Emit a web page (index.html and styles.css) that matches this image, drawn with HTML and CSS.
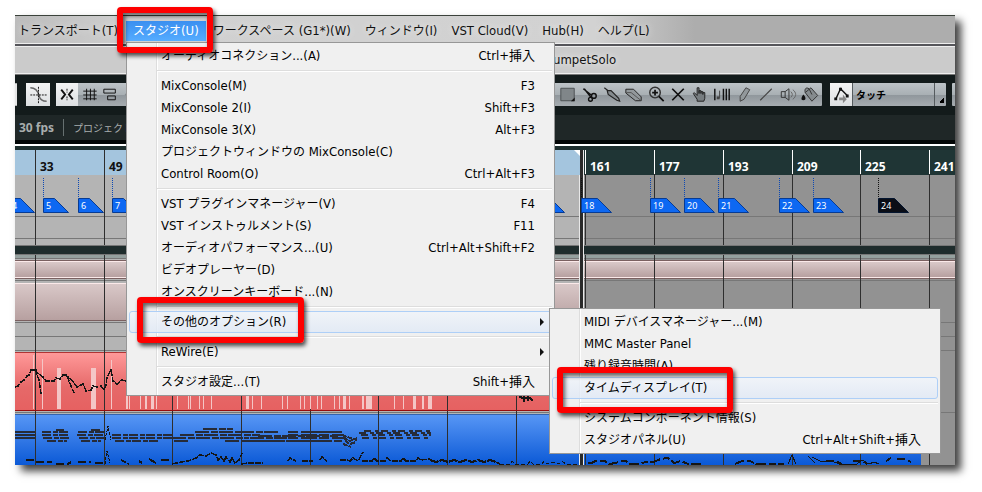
FILE: index.html
```
<!DOCTYPE html>
<html lang="ja">
<head>
    <meta charset="UTF-8">
    <meta name="viewport" content="width=device-width, initial-scale=1.0">
    <title>TrumpetSolo</title>
    <link rel="stylesheet" href="styles.css">
</head>
<body>
    <div class="window">
        <nav class="menubar">
            <button><span class="kana">トランスポート</span>(T)</button>
            <button class="open"><span class="kana">スタジオ</span>(U)</button>
            <button><span class="kana">ワークスペース</span> (G1*)(W)</button>
            <button><span class="kana">ウィンドウ</span>(I)</button>
            <button>VST Cloud(V)</button>
            <button>Hub(H)</button>
            <button><span class="kana">ヘルプ</span>(L)</button>
        </nav>
        <div class="title">TrumpetSolo</div>

        <div class="toolbar">
            <div class="tools stub"></div>
            <button class="tool single" aria-label="クロスフェード">
                <svg viewBox="0 0 24 24"><path d="M4 5c6 0 8 4 9 8s3 6 8 6" stroke="#666" stroke-width="1.500"/><path d="M4 12.500h17M12.500 4v17" stroke-dasharray="2 1"/></svg>
            </button>
            <div class="tools snap">
                <button class="tool on" aria-label="スナップ">
                    <svg viewBox="0 0 22 24"><path d="M5 7l4 5-4 5M17 7l-4 5 4 5" stroke-width="2"/><path d="M11 6v4M11 14v4" stroke-dasharray="2 1"/></svg>
                </button>
                <button class="tool" aria-label="グリッド">
                    <svg viewBox="0 0 22 24"><path d="M8.500 6v12M12.500 6v12M16.500 6v12M5 8.500h14M5 12.500h14M5 16.500h14"/></svg>
                </button>
                <button class="tool" aria-label="クオンタイズ">
                    <svg viewBox="0 0 22 24"><path d="M3.500 6.500h12v4h-12zM7.500 13.500h8v4h-8z"/></svg>
                </button>
                <button class="tool faded" aria-label="リンク">
                    <svg viewBox="0 0 22 24"><path d="M8 7l-5 5 5 5M12 10h6"/></svg>
                </button>
            </div>
            <div class="tools edit">
                <button class="tool" aria-label="範囲選択">
                    <svg viewBox="0 0 22 24"><path d="M3.500 5.500h14v13h-14z" fill="#808689" stroke="#4b5053"/><path d="M18 15v4h-4z" fill="#111" stroke="none"/></svg>
                </button>
                <button class="tool" aria-label="はさみ">
                    <svg viewBox="0 0 22 24"><path d="M4 6l9 7M5 6l7 9" stroke-width="1.500"/><circle cx="15" cy="13.500" r="2.500" stroke-width="1.500"/><circle cx="11.500" cy="17" r="2" stroke-width="1.500"/></svg>
                </button>
                <button class="tool" aria-label="のり">
                    <svg viewBox="0 0 22 24"><path d="M3 5l4 3M6 8l4 0 8 8 1 3-3-1-9-6z" fill="#858b8e" stroke="#222" stroke-width="1.200"/></svg>
                </button>
                <button class="tool" aria-label="消しゴム">
                    <svg viewBox="0 0 22 24"><path d="M2.500 6.500h8l8 8v4h-6l-10-8z" fill="#92989b" stroke="#222"/><path d="M3 10h5l10 8" stroke="#555"/></svg>
                </button>
                <button class="tool" aria-label="ズーム">
                    <svg viewBox="0 0 22 24"><circle cx="10" cy="10" r="5.500" stroke="#333" stroke-width="1.500"/><path d="M10 7v6M7 10h6M14 14l5 5" stroke-width="1.800"/></svg>
                </button>
                <button class="tool" aria-label="ミュート">
                    <svg viewBox="0 0 22 24"><path d="M5 6l12 12M17 6L5 18" stroke-width="1.800"/></svg>
                </button>
                <button class="tool" aria-label="タイムワープ">
                    <svg viewBox="0 0 22 24"><path d="M8 19v-2l-4-6 1-1 3 3V5h2v6V8h2v3-2h2v3-2h2v6l-1 3z" fill="#777d80" stroke="#222"/></svg>
                </button>
                <button class="tool" aria-label="コンプ">
                    <svg viewBox="0 0 22 24"><path d="M3.500 6v12M12.500 6v12M15.500 6v12M18.500 6v12" stroke-width="1.500"/><path d="M8.500 8v8" stroke="#444"/><path d="M5.500 14h3v3h-3z" fill="#444" stroke="none"/></svg>
                </button>
                <button class="tool" aria-label="鉛筆">
                    <svg viewBox="0 0 22 24"><path d="M13 5l4 2-6 10-4 2v-5z" fill="#92989b" stroke="#444"/></svg>
                </button>
                <button class="tool" aria-label="ライン">
                    <svg viewBox="0 0 22 24"><path d="M5 18L17 6" stroke="#444" stroke-width="1.200"/></svg>
                </button>
                <button class="tool" aria-label="再生">
                    <svg viewBox="0 0 22 24"><path d="M4 9h4l4-3v12l-4-3H4zM8 9v6" stroke="#333"/><path d="M14 9c2 2 2 4 0 6M16 7c4 3 4 7 0 10" stroke="#666"/></svg>
                </button>
                <button class="tool" aria-label="カラー">
                    <svg viewBox="0 0 22 24"><path d="M6 10l6-5 7 8-6 6zM6 10c-1-4 1-6 4-4l3 6" fill="#858b8e" stroke="#333"/><path d="M4 12c3 3 3 6 0 6s-2-3 0-6z" fill="#111" stroke="none"/></svg>
                </button>
            </div>
            <div class="tools automation">
                <button class="tool on" aria-label="オートメーション">
                    <svg viewBox="0 0 22 24"><path d="M5.500 17l5-11 7 7" stroke-width="1.500"/><path d="M4 15h3v3H4zM9 5h3v3H9zM16 12h3v3h-3z" fill="#111" stroke="none"/><path d="M9 15h4v-3l4 5-4 4v-3H9z" fill="#888" stroke="none"/></svg>
                </button>
                <button class="mode">タッチ</button>
            </div>
            <div class="tools rest"></div>
        </div>

        <div class="info">
            <b>30 fps</b>
            <span>プロジェクト</span>
        </div>

        <div class="arrange">
            <svg class="canvas" width="940" height="315" viewBox="15 150 940 315">
                <defs>
                    <linearGradient id="pink" x2="0" y2="1"><stop stop-color="#d9c8c8"/><stop offset="1" stop-color="#b7a0a0"/></linearGradient>
                    <linearGradient id="red" x2="0" y2="1"><stop stop-color="#ff9999"/><stop offset=".6" stop-color="#e66969"/><stop offset="1" stop-color="#e66161"/></linearGradient>
                    <linearGradient id="blue" x2="0" y2="1"><stop stop-color="#5796f5"/><stop offset="1" stop-color="#0b59d6"/></linearGradient>
                </defs>

                <!-- ruler and track background -->
                <path fill="#1f3535" d="M15 150h940v25H15z"/>
                <path fill="#a4c5de" d="M15 150h565v25H15z"/>
                <path fill="#fff" d="M574 150h6v6z"/>
                <path fill="#929292" d="M15 175h940v290H15z"/>
                <path fill="#b4b4b4" d="M15 175h565v290H15z"/>
                <path stroke="#777" d="M15 216.500h940M15 238.500h940M15 280.500h940M15 322.500h940M15 336.500h940M15 350.500h940M15 412.500h940"/>
                <path fill="#94a09e" d="M15 255h940v3H15z"/>
                <path stroke="#777" d="M15 258.500h940"/>

                <!-- clips -->
                <path fill="url(#pink)" d="M15 262h940v15H15z"/>
                <path stroke="#fbe9e9" d="M15 261.500h940M15 277.500h940"/>
                <path stroke="#7a6060" d="M15 278.500h940M15 260.500h940"/>
                <path fill="url(#pink)" d="M15 284h565v36H15z"/>
                <path stroke="#fbe9e9" d="M15 283.500h565"/>
                <path stroke="#7a6060" d="M15 320.500h565"/>
                <path fill="url(#red)" d="M15 353h565v57H15z"/>
                <path stroke="#b03535" d="M15 352.500h565"/>
                <path fill="url(#blue)" d="M15 415h906v50H15z"/>
                <path stroke="#3564ad" d="M15 414.500h906"/>

                <!-- bar lines -->
                <path stroke="#2e2e2e" d="M35.500 150v315M104.500 150v315M172.500 150v315M241.500 150v315M310.500 150v315M378.500 150v315M447.500 150v315M516.500 150v315M585.500 150v315M654.500 150v315M723.500 150v315M792.500 150v315M860.500 150v315M929.500 150v315"/>
                <path stroke="#fff" d="M585.500 150v24M654.500 150v24M723.500 150v24M792.500 150v24M860.500 150v24M929.500 150v24"/>
                <path stroke="#980d0d" d="M15 410.500h565"/>
                <path fill="#1e2c2c" d="M15 246h940v8H15z"/>
                <path stroke="#777" d="M15 245.500h940M15 254.500h940"/>
                <path fill="#292929" d="M580 150h3v315h-3z"/>
                <path stroke="#e8e8e8" d="M583.500 150v315M579.500 175v290"/>

                <g class="bars">
                    <text x="40" y="171">33</text><text x="109" y="171">49</text>
                </g>
                <g class="bars light">
                    <text x="590" y="171">161</text><text x="659" y="171">177</text><text x="728" y="171">193</text>
                    <text x="797" y="171">209</text><text x="865" y="171">225</text><text x="934" y="171">241</text>
                </g>

                <!-- cycle markers -->
                <path class="stems" d="M43.500 178v20M78.500 178v20M112.500 178v20M650.500 178v20M684.500 178v20M718.500 178v20M779.500 178v20M813.500 178v20"/>
                <path class="stems dark" d="M581.500 178v20M878.500 178v20"/>
                <g class="flags">
                    <path d="M9.500 198.500h11l14 14h-25zM43.500 198.500h11l14 14h-25zM78.500 198.500h11l14 14h-25zM112.500 198.500h11l14 14h-25z"/>
                    <path d="M534.500 198.500h16l14 14h-30zM581.500 198.500h16l14 14h-30zM650.500 198.500h16l14 14h-30zM684.500 198.500h16l14 14h-30zM718.500 198.500h16l14 14h-30zM779.500 198.500h16l14 14h-30zM813.500 198.500h16l14 14h-30z"/>
                    <path class="active" d="M878.500 198.500h16l14 14h-30z"/>
                    <text x="12" y="209">4</text><text x="46" y="209">5</text><text x="81" y="209">6</text><text x="115" y="209">7</text>
                    <text x="584" y="209">18</text><text x="653" y="209">19</text><text x="687" y="209">20</text><text x="721" y="209">21</text>
                    <text x="782" y="209">22</text><text x="816" y="209">23</text><text x="881" y="209">24</text>
                </g>

                <!-- controller data in the red part -->
                <path fill="#f4c6c6" d="M33 355h1v54h-1zM42 359h1v50h-1zM57 368h4v41h-4zM91 368h5v41h-5zM111 360h1v49h-1zM126 390h2v19h-2zM129 390h1v19h-1zM140 390h1v19h-1zM145 390h2v19h-2zM151 390h3v19h-3zM156 390h1v19h-1zM177 390h1v19h-1zM188 390h1v19h-1zM190 390h1v19h-1zM199 390h1v19h-1zM203 390h1v19h-1zM211 390h1v19h-1zM246 390h3v19h-3zM252 390h1v19h-1zM261 390h1v19h-1zM282 390h1v19h-1zM287 390h1v19h-1zM300 390h1v19h-1zM304 390h1v19h-1zM310 390h1v19h-1zM317 390h1v19h-1zM321 390h1v19h-1zM334 390h1v19h-1zM339 390h1v19h-1zM343 390h3v19h-3zM349 390h1v19h-1zM362 390h2v19h-2zM366 390h6v19h-6zM394 390h1v19h-1zM403 390h1v19h-1zM413 390h3v19h-3zM422 390h2v19h-2zM428 390h4v19h-4z"/>
                <g class="notes">
                    <path stroke-width="1.500" stroke-dasharray="6 1" d="M15 387l3-1 3-4 3-2 3-4 2-1 2-5h5l1 5 2 5 2 14M34 370l5 4 4 3 3 4h8l2-3 4 1 3-4h4l2 4-2-3 4 10 3 7M70 378l7 9 6-3 3 7 5-1 2-4 4 1 4-1 3 4 2-5 1-8 4-7 2 11 4 3 5-4 4 1 3-3h4"/>
                    <path stroke-width="2" d="M519 396l3 2h8l3 3M524 395v7M528 395v6"/>

                    <!-- chords in the blue part -->
                    <g class="chords">
                        <path d="M15 432h20M15 435h20M15 438h20"/>
                        <path stroke-dasharray="9 2 5 1" d="M42 432h27M42 435h28M43 438h27M47 441h20M56 430h8"/>
                        <path stroke-dasharray="9 2 5 1" d="M78 432h26M77 435h27M79 438h25M81 441h20M91 430h9M112 435h60M112 438h60M115 441h45"/>
                        <path stroke-dasharray="14 2 7 1" d="M172 438h77M180 435h80M195 432h47M203 429h30M174 441h16M225 441h60M250 438h37M240 432h38M246 441h90M258 436h80"/>
                        <path stroke-dasharray="10 3 16 2" d="M288 432h54M288 435h56M288 438h58M290 441h52M313 432h27"/>
                        <path stroke-dasharray="5 1" d="M342 435l8 3 7 2M343 438l7 3 7-3M345 441l5 3 6-2M343 444l8 3"/>
                        <path stroke-dasharray="7 4 4 2" d="M359 433h72M361 435h70M362 438h68M364 431h66"/>
                    </g>
                    <path d="M105 440l2-9 1-5 1 6 2 8" stroke-dasharray="3 1"/>
                    <path stroke-width="2" stroke-dasharray="8 3 5 7" d="M26 460h10M36 462h21M56 464h12l3-2h20M95 463h9M139 461l3 2M149 459l7 4M161 460h9"/>
                    <path stroke-dasharray="3 1" d="M105 464l2-13 3 12"/>
                    <path stroke-width="1.500" stroke-dasharray="6 1" d="M121 460l8 4M172 464l9-2 7-1 8-3 4-3 6 1 5-3 5 2 2 5 3-3 3 4 2-4 4 5 2-4 3 5 4-3 3-7M241 464l7-1h15M288 461l2-3 6 3M302 461h11M320 460l2-3 5 4M340 460h7l3 1 3-3 5 3 5-9M362 461h10l2-3 3 3h8l2-3 4 3h10l2-3 3 3h10l2-3 3 2 9-1"/>
                    <path stroke-width="2" stroke-dasharray="9 1" d="M430 460l6 2 6-2 6 2 6-2 6 2 6-2 6 2 6-2 6 2 6-2 6 2 4 2"/>
                    <path stroke-dasharray="4 2" d="M500 464h10l2-3 3 3h13l2-3 3 3h9l2-3 3 3 6-2 6 2 3-3 4 3h13"/>
                    <path stroke-width="2" stroke-dasharray="10 3 7 2" d="M588 463h4l3-2h10l4 3 7-1 4-2h6l4 3h10l5-2h8l8-3 7-1 6 5 7-2 7 3h14M735 464l7-3h8l6 3h28"/>
                    <path d="M788 464l4-9 4 9M808 456l7 7M812 457l8 4h12l7 3h18l5-4 7 4 5-2 5 2"/>
                    <path stroke-width="2" stroke-dasharray="8 3" d="M826 461h10l6 3M853 461h10l4 3M886 461l5-3M897 459h8l6 3"/>
                </g>
            </svg>
        </div>

        <div class="menu studio">
            <button><span class="kana">オーディオコネクション</span>...(A)<kbd>Ctrl+挿入</kbd></button>
            <hr>
            <button>MixConsole(M)<kbd>F3</kbd></button>
            <button>MixConsole 2(I)<kbd>Shift+F3</kbd></button>
            <button>MixConsole 3(X)<kbd>Alt+F3</kbd></button>
            <button><span class="kana">プロジェクトウィンドウの</span> MixConsole(C)</button>
            <button>Control Room(O)<kbd>Ctrl+Alt+F3</kbd></button>
            <hr>
            <button>VST <span class="kana">プラグインマネージャー</span>(V)<kbd>F4</kbd></button>
            <button>VST <span class="kana">インストゥルメント</span>(S)<kbd>F11</kbd></button>
            <button><span class="kana">オーディオパフォーマンス</span>...(U)<kbd>Ctrl+Alt+Shift+F2</kbd></button>
            <button><span class="kana">ビデオプレーヤー</span>(D)</button>
            <button><span class="kana">オンスクリーンキーボード</span>...(N)</button>
            <hr>
            <button class="sub hover"><span class="kana">その他のオプション</span>(R)</button>
            <hr>
            <button class="sub">ReWire(E)</button>
            <hr>
            <button><span class="kana">スタジオ設定</span>...(T)<kbd>Shift+挿入</kbd></button>
        </div>

        <div class="menu options">
            <button>MIDI <span class="kana">デバイスマネージャー</span>...(M)</button>
            <button>MMC Master Panel</button>
            <button><span class="kana">残り録音時間</span>(A)</button>
            <button class="hover"><span class="kana">タイムディスプレイ</span>(T)</button>
            <hr>
            <button><span class="kana">システムコンポーネント情報</span>(S)</button>
            <button><span class="kana">スタジオパネル</span>(U)<kbd>Ctrl+Alt+Shift+挿入</kbd></button>
        </div>

        <div class="mark mark-studio"></div>
        <div class="mark mark-options"></div>
        <div class="mark mark-display"></div>
    </div>
</body>
</html>
```
FILE: styles.css
```
* {
    box-sizing: border-box;
}
body {
    margin: 0;
    padding: 15px 27px 27px 15px;
    background: #fff;
    color: #111;
    font-family: "DejaVu Sans Condensed", "Noto Sans CJK JP", sans-serif;
    font-size: 13px;
}
button {
    margin: 0;
    padding: 0;
    border: none;
    background: none;
    color: inherit;
    font: inherit;
    white-space: nowrap;
}
.kana {
    font-size: 12px;
}
.window {
    position: relative;
    background: #131b1b;
    box-shadow: 6px 6px 8px rgba(0, 0, 0, 0.75);
}

/* menu bar and title */
.menubar {
    display: flex;
    align-items: center;
    height: 29px;
    padding-top: 2px;
    background: linear-gradient(90deg, #bcbcbc, #d0d0d0 120px, #d2d2d2 580px, #adadad 680px);
    border-top: 1px solid #3b423b;
    border-bottom: 1px solid #eee;
    overflow: hidden;
}
.menubar button {
    flex: none;
    height: 20px;
    padding: 0 7px;
    line-height: 18px;
    text-shadow: 0 0 6px #eee;
}
.menubar button:first-child {
    width: 111px;
    padding: 0 3px;
    text-align: left;
}
.menubar .open {
    background: linear-gradient(#3a8ff0, #55acff);
    color: #fff;
    text-shadow: none;
}
.title {
    height: 31px;
    padding-left: 528px;
    border-top: 2px solid #55555a;
    border-bottom: 1px solid #777;
    background: #cbcbcb;
    box-shadow: inset 0 1px #eee, inset 0 -1px #eee;
    line-height: 28px;
    text-shadow: 0 0 6px #fff;
}

/* toolbar */
.toolbar {
    display: flex;
    align-items: center;
    height: 40px;
    padding-bottom: 1px;
    overflow: hidden;
}
.tools {
    display: flex;
    flex: none;
    height: 23px;
    border-radius: 1px;
    background: linear-gradient(#bdc3c7, #a9b0b4 50%, #8f969b 51%, #a6acb0);
}
.tool {
    flex: none;
    width: 22px;
    height: 23px;
}
.tool svg {
    display: block;
    width: 100%;
    height: 23px;
    fill: none;
    stroke: #111;
}
.tool.on,
.tool.single {
    background: linear-gradient(#f4f4f4, #dcdfe1);
}
.tool.single {
    width: 24px;
    margin: 0 6px 0 9px;
}
.tool.faded {
    opacity: 0.3;
}
.stub {
    width: 2px;
    background: #e6e6e6;
}
.snap {
    width: 460px;
}
.edit {
    width: 298px;
    margin: 0 8px;
    padding-right: 1px;
    justify-content: flex-end;
}
.edit::before {
    content: "";
    width: 30px;
    margin-right: 2px;
    background: #e3e5e6;
}
.automation {
    width: 116px;
    margin-right: 6px;
}
.mode {
    position: relative;
    flex: 1;
    padding-left: 3px;
    border-left: 1px solid #555b5e;
    color: #000;
    font-weight: bold;
    font-size: 10px;
    text-align: left;
}
.mode::after {
    content: "";
    position: absolute;
    inset: 0 0 0 auto;
    width: 11px;
    border-left: 1px solid #555b5e;
    background: linear-gradient(135deg, transparent 50%, #000 50%) 4px 15px / 5px 5px no-repeat;
}
.rest {
    width: 40px;
}

/* info line */
.info {
    display: flex;
    align-items: center;
    height: 35px;
    padding: 0 4px 10px;
    background: linear-gradient(#1f2727 25px, #030606 25px, #030606 29px, #fff 29px, #fff 31px, #1d2e2e 31px);
    color: #a8adad;
    font-family: "Noto Sans", "Noto Sans CJK JP", sans-serif;
    font-size: 12px;
}
.info b {
    padding-right: 9px;
    border-right: 1px solid #667070;
}
.info span {
    padding-left: 9px;
    font-size: 10px;
}

/* arrangement */
.arrange {
    overflow: hidden;
    background: #929292;
    font-family: "Noto Sans", sans-serif;
}
.canvas {
    display: block;
}
.bars {
    font-weight: bold;
    font-size: 12px;
    fill: #111;
}
.bars.light {
    fill: #fff;
}
.stems {
    stroke: #0b48b4;
    stroke-dasharray: 1 1;
}
.stems.dark {
    stroke: #111;
}
.flags {
    font-size: 9px;
}
.flags path {
    fill: #0d68f2;
    stroke: #073b93;
}
.flags .active {
    fill: #0a0d16;
    stroke: #04152f;
}
.flags text {
    fill: #fff;
}
.notes {
    fill: none;
    stroke: #151515;
    shape-rendering: crispEdges;
}
.chords {
    stroke: #262b38;
    stroke-width: 2;
}

/* drop-down menus */
.menu {
    position: absolute;
    display: flex;
    flex-direction: column;
    padding: 2px;
    border: 1px solid #979797;
    background: linear-gradient(90deg, transparent 29px, #ddd 29px, #ddd 30px, #fff 30px, #fff 31px, transparent 31px) #f0f0f0;
    color: #000;
}
.studio {
    top: 27px;
    left: 111px;
    width: 429px;
}
.options {
    top: 293px;
    left: 534px;
    width: 392px;
}
.menu button {
    position: relative;
    height: 22px;
    padding: 0 16px 0 31px;
    border: 1px solid transparent;
    border-radius: 3px;
    line-height: 20px;
    text-align: left;
}
.menu kbd {
    float: right;
    font: inherit;
}
.menu hr {
    width: auto;
    height: 2px;
    margin: 3px 0 3px 28px;
    border: none;
    border-top: 1px solid #ddd;
    border-bottom: 1px solid #fff;
}
.menu .hover {
    border-color: #aecff7;
    background: linear-gradient(rgba(240, 244, 250, 0.8), rgba(224, 233, 246, 0.8));
}
.menu .sub::after {
    content: "";
    position: absolute;
    top: 6px;
    right: 7px;
    border: 4px solid transparent;
    border-left-color: #111;
    border-right: none;
}

/* red frames */
.mark {
    position: absolute;
    height: 46px;
    border: 6px solid #fe0000;
    border-radius: 4px;
    box-shadow: 2px 3px 4px rgba(0, 0, 0, 0.7), inset 2px 3px 4px rgba(0, 0, 0, 0.6);
    pointer-events: none;
}
.mark-studio {
    top: -8px;
    left: 102px;
    width: 96px;
}
.mark-options {
    top: 282px;
    left: 122px;
    width: 167px;
}
.mark-display {
    top: 352px;
    left: 542px;
    width: 176px;
}
```
